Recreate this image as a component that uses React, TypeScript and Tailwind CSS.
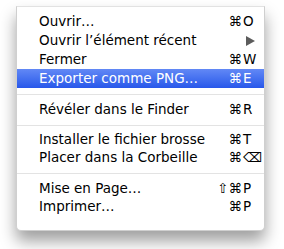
import React from "react";

type Item = {
  label: string;
  mods?: string;
  keyLabel?: string;
  submenu?: boolean;
  active?: boolean;
  h?: string;
};

const groups: Item[][] = [
  [
    { label: "Ouvrir…", mods: "⌘", keyLabel: "O", h: "h-[19px]" },
    { label: "Ouvrir l’élément récent", submenu: true, h: "h-[19px]" },
    { label: "Fermer", mods: "⌘", keyLabel: "W", h: "h-[19px]" },
    { label: "Exporter comme PNG…", mods: "⌘", keyLabel: "E", active: true, h: "h-[19px]" },
  ],
  [{ label: "Révéler dans le Finder", mods: "⌘", keyLabel: "R", h: "h-[19px]" }],
  [
    { label: "Installer le fichier brosse", mods: "⌘", keyLabel: "T", h: "h-[18px]" },
    { label: "Placer dans la Corbeille", mods: "⌘", keyLabel: "⌫", h: "h-[18px]" },
  ],
  [
    { label: "Mise en Page…", mods: "⇧⌘", keyLabel: "P", h: "h-[19px]" },
    { label: "Imprimer…", mods: "⌘", keyLabel: "P", h: "h-[18px]" },
  ],
];

function Row({ item }: { item: Item }) {
  return (
    <div
      className={`flex items-center pl-[22px] pr-[8px] ${item.h} ${
        item.active
          ? "bg-gradient-to-b from-[#6288f5] to-[#2857ea] text-white"
          : "text-black"
      }`}
    >
      <span className="flex-1 whitespace-nowrap">{item.label}</span>
      {item.submenu ? (
        <svg width="9" height="10" viewBox="0 0 9 10" className="mr-[1px]">
          <polygon points="0,0 9,5 0,10" fill="#5c5c5c" />
        </svg>
      ) : (
        <span className="flex">
          <span className="text-right whitespace-nowrap">{item.mods}</span>
          <span className="w-[14px] pl-[1px] whitespace-nowrap">{item.keyLabel}</span>
        </span>
      )}
    </div>
  );
}

export default function App() {
  return (
    <div className="w-[284px] h-[249px] bg-white pt-[6px] pl-[16px]">
      <div
        className="w-[249px] h-[225px] bg-white border border-[#cfcfcf] border-t-[#e2e2e2] rounded-b-[5px] shadow-[0_10px_16px_rgba(0,0,0,0.38)] pt-[5px] text-[13.5px] leading-none"
        style={{ fontFamily: '"DejaVu Sans", sans-serif' }}
      >
        {groups.map((g, gi) => (
          <div key={gi}>
            {gi > 0 && (
              <div className="h-[12px] flex items-center">
                <div className="w-full h-px bg-[#e3e3e3]" />
              </div>
            )}
            {g.map((item) => (
              <Row key={item.label} item={item} />
            ))}
          </div>
        ))}
      </div>
    </div>
  );
}
